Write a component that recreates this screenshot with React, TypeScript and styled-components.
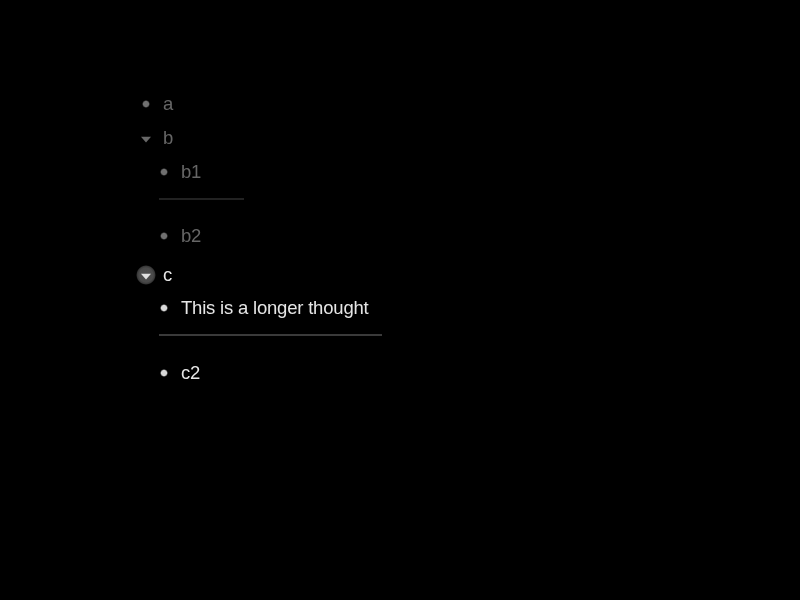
import React from "react";
import styled, { createGlobalStyle } from "styled-components";

const Global = createGlobalStyle`
  html, body { margin: 0; padding: 0; background: #000; }
  body { font-family: "Liberation Sans", Arial, sans-serif; -webkit-font-smoothing: antialiased; }
`;

const Page = styled.div`
  width: 800px;
  height: 600px;
  background: #000;
  padding: 87px 0 0 136px;
  box-sizing: border-box;
  overflow: hidden;
`;

const Group = styled.div<{ $active?: boolean }>`
  display: flex;
  flex-direction: column;
  margin-top: ${(p) => (p.$active ? "5px" : "0")};
  will-change: transform;
`;

const Row = styled.div<{ $nested?: boolean; $height?: number }>`
  display: flex;
  align-items: center;
  height: ${(p) => p.$height ?? 34}px;
  padding-left: ${(p) => (p.$nested ? "18px" : "0")};
`;

const Handle = styled.span<{ $halo?: boolean }>`
  width: 20px;
  height: 20px;
  margin-right: 7px;
  flex: none;
  display: flex;
  align-items: center;
  justify-content: center;
  border-radius: 50%;
  background: ${(p) =>
    p.$halo ? "radial-gradient(closest-side, #4e4e4e 0%, #4a4a4a 70%, #383838 88%, #000 100%)" : "transparent"};
`;

const Dot = styled.span<{ $active?: boolean }>`
  width: 8px;
  height: 8px;
  border-radius: 50%;
  background: radial-gradient(
    closest-side,
    ${(p) => (p.$active ? "#d8d8d8" : "#707070")} 65%,
    transparent 100%
  );
`;

const Caret = styled.svg`
  width: 12px;
  height: 7px;
  display: block;
  margin-top: 3px;
`;

const Label = styled.span<{ $active?: boolean }>`
  font-size: 18.5px;
  letter-spacing: -0.2px;
  line-height: 22px;
  color: ${(p) => (p.$active ? "#e6e6e6" : "#666666")};
`;

const Divider = styled.div<{ $width: number; $active?: boolean }>`
  width: ${(p) => p.$width}px;
  height: 2px;
  margin: 10px 0 ${(p) => (p.$active ? 20 : 19)}px 23px;
  background: ${(p) => (p.$active ? "#3a3a3a" : "#222222")};
`;

function CaretIcon({ color }: { color: string }) {
  return (
    <Caret viewBox="0 0 12 7">
      <path d="M1 0.8 H11 L6 6.4 Z" fill={color} />
    </Caret>
  );
}

export default function App() {
  return (
    <Page>
      <Global />
      <Group>
        <Row>
          <Handle><Dot /></Handle>
          <Label>a</Label>
        </Row>
        <Row>
          <Handle><CaretIcon color="#686868" /></Handle>
          <Label>b</Label>
        </Row>
        <Row $nested $height={33}>
          <Handle><Dot /></Handle>
          <Label>b1</Label>
        </Row>
        <Divider $width={85} />
        <Row $nested>
          <Handle><Dot /></Handle>
          <Label>b2</Label>
        </Row>
      </Group>
      <Group $active>
        <Row>
          <Handle $halo><CaretIcon color="#e0e0e0" /></Handle>
          <Label $active>c</Label>
        </Row>
        <Row $nested $height={32}>
          <Handle><Dot $active /></Handle>
          <Label $active>This is a longer thought</Label>
        </Row>
        <Divider $width={223} $active />
        <Row $nested>
          <Handle><Dot $active /></Handle>
          <Label $active>c2</Label>
        </Row>
      </Group>
    </Page>
  );
}
